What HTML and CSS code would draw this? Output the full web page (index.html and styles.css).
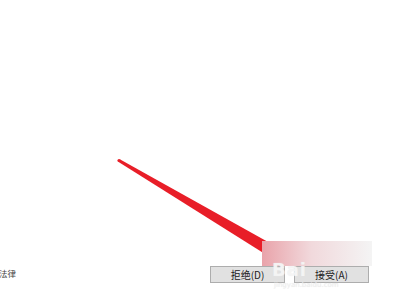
FILE: index.html
```html
<!DOCTYPE html>
<html lang="zh-CN">
  <head>
    <meta charset="UTF-8" />
    <meta name="viewport" content="width=device-width, initial-scale=1.0" />
    <title>许可协议</title>
    <link rel="stylesheet" href="styles.css">
  </head>
  <body>
    <div class="page">
      <div class="content"></div>

      <footer class="footer">
        <div class="legal-link">法律</div>
        <div class="actions">
          <button class="btn">拒绝(D)</button>
          <button class="btn">接受(A)</button>
        </div>
      </footer>

      <!-- annotation drawn over the dialog -->
      <svg class="arrow" width="400" height="300" viewBox="0 0 400 300">
        <polygon points="118.2,161.8 119.8,159.2 273,244.8 267,255.2" fill="#e81e28" />
        <circle cx="119" cy="160.5" r="1.6" fill="#e81e28" />
      </svg>
      <div class="mark-box"></div>
      <div class="watermark">
        <span class="wm-big">Bai</span>
        <span class="wm-small">jingyan.baidu.com</span>
      </div>
    </div>
  </body>
</html>
```

FILE: styles.css
```css
body {
  margin: 0;
  background-color: white;
  font-family: "Noto Sans CJK SC", "Noto Sans", sans-serif;
  color: #333;
}

.page {
  position: relative;
  width: 400px;
  height: 300px;
  overflow: hidden;
  display: flex;
  flex-direction: column;
}

.content {
  flex: 1;
}

.footer {
  display: flex;
  justify-content: space-between;
  align-items: flex-start;
  height: 17px;
  padding: 0 31px 17px 0;
}

.legal-link {
  font-size: 8.5px;
  line-height: 10px;
  margin-left: -1px;
  margin-top: 2px;
  color: #444;
}

.actions {
  display: flex;
  gap: 9px;
}

.btn {
  width: 75px;
  height: 17px;
  padding: 0;
  background-color: #e1e1e1;
  border: 1px solid #adadad;
  font-family: "Noto Sans CJK SC", sans-serif;
  font-size: 10px;
  line-height: 15px;
  color: #222;
}

.arrow {
  position: absolute;
  left: 0;
  top: 0;
}

.mark-box {
  position: absolute;
  left: 262px;
  top: 241px;
  width: 110px;
  height: 25px;
  background: linear-gradient(to right, #e9a3aa, #f1d9dc 45%, #f4f4f4);
}

.watermark {
  position: absolute;
  left: 272px;
  top: 260px;
  display: flex;
  flex-direction: column;
  align-items: flex-start;
  font-family: "DejaVu Sans", sans-serif;
}

.wm-big {
  font-size: 18px;
  line-height: 20px;
  font-weight: bold;
  color: rgba(255, 255, 255, 0.6);
  text-shadow: 0 0 1px #e4e4e4;
  letter-spacing: 1px;
}

.wm-small {
  font-size: 7px;
  line-height: 10px;
  margin-left: 2px;
  color: rgba(240, 240, 240, 0.9);
  text-shadow: 0 0 1px #e6e6e6;
}
```
